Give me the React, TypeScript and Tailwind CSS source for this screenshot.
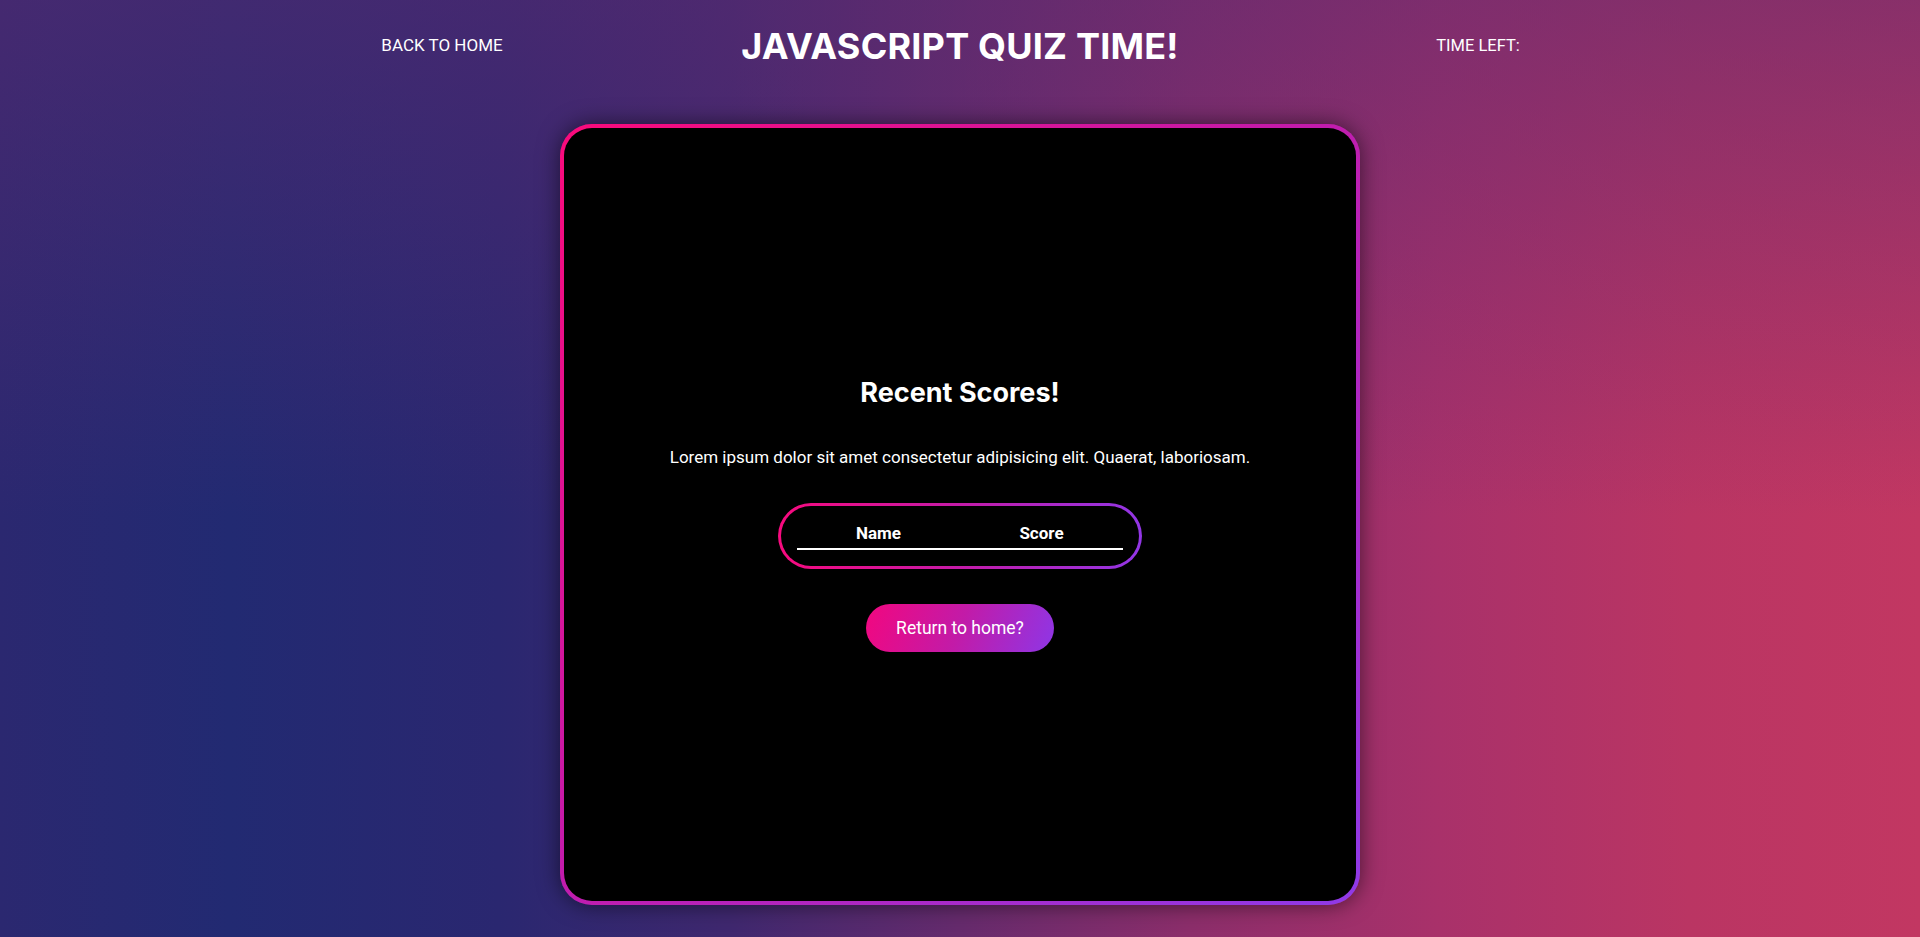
import React from 'react';

const bodyFont = { fontFamily: 'Roboto, "Noto Sans", sans-serif' };
const headFont = { fontFamily: 'Inter, "Noto Sans", sans-serif' };

const scores: { name: string; score: number }[] = [];

const App: React.FC = () => {
  return (
    <div
      className="relative min-h-[937px] w-full overflow-hidden text-white bg-[linear-gradient(180deg,rgba(90,42,112,0.55)_0%,rgba(90,42,112,0)_55%),linear-gradient(90deg,#2b2870_0%,#222a72_12%,#2a2770_26%,#3f286f_38%,#662b6d_50%,#8c2e6b_62%,#a9316a_75%,#ba3563_88%,#c23762_100%)]"
      style={bodyFont}
    >
      <header className="mx-auto grid h-[92px] w-[1554px] grid-cols-3 items-center">
        <a href="#" className="justify-self-center text-[17px] uppercase">
          Back to home
        </a>
        <h1 className="justify-self-center text-[36px] font-bold uppercase tracking-[0.2px]" style={headFont}>
          Javascript Quiz Time!
        </h1>
        <span className="justify-self-center text-[16.5px] uppercase">Time left:</span>
      </header>

      <main className="mt-[32px] flex justify-center">
        <div className="h-[781px] w-[800px] rounded-[32px] bg-[linear-gradient(135deg,#fb0a7b_0%,#c51aa9_45%,#8f3ae8_100%)] p-[4px] shadow-[0_0_22px_rgba(0,0,0,0.55)]">
          <section className="flex h-full w-full flex-col items-center justify-center rounded-[28px] bg-black">
            <h2 className="text-[27px] font-bold leading-[32px]" style={headFont}>
              Recent Scores!
            </h2>
            <p className="mt-[36px] text-[17px] leading-[24px]">
              Lorem ipsum dolor sit amet consectetur adipisicing elit. Quaerat, laboriosam.
            </p>

            <div className="mt-[34px] rounded-full bg-[linear-gradient(90deg,#f80a7e_0%,#c41ba8_50%,#9236e6_100%)] p-[3px]">
              <div className="rounded-full bg-black px-[16px] pb-[16px] pt-[16px]">
                <table className="border-collapse">
                  <thead>
                    <tr>
                      <th className="w-[163px] border-b-2 border-white pb-[4px] text-[17px] font-bold leading-[22px]">Name</th>
                      <th className="w-[163px] border-b-2 border-white pb-[4px] text-[17px] font-bold leading-[22px]">Score</th>
                    </tr>
                  </thead>
                  <tbody>
                    {scores.map((s) => (
                      <tr key={s.name}>
                        <td className="text-center">{s.name}</td>
                        <td className="text-center">{s.score}</td>
                      </tr>
                    ))}
                  </tbody>
                </table>
              </div>
            </div>

            <button className="mt-[35px] h-[48px] w-[188px] rounded-full bg-[linear-gradient(110deg,#f2077f_0%,#c21ba8_50%,#8e36e6_100%)] text-[17.5px]">
              Return to home?
            </button>
          </section>
        </div>
      </main>
    </div>
  );
};

export default App;
